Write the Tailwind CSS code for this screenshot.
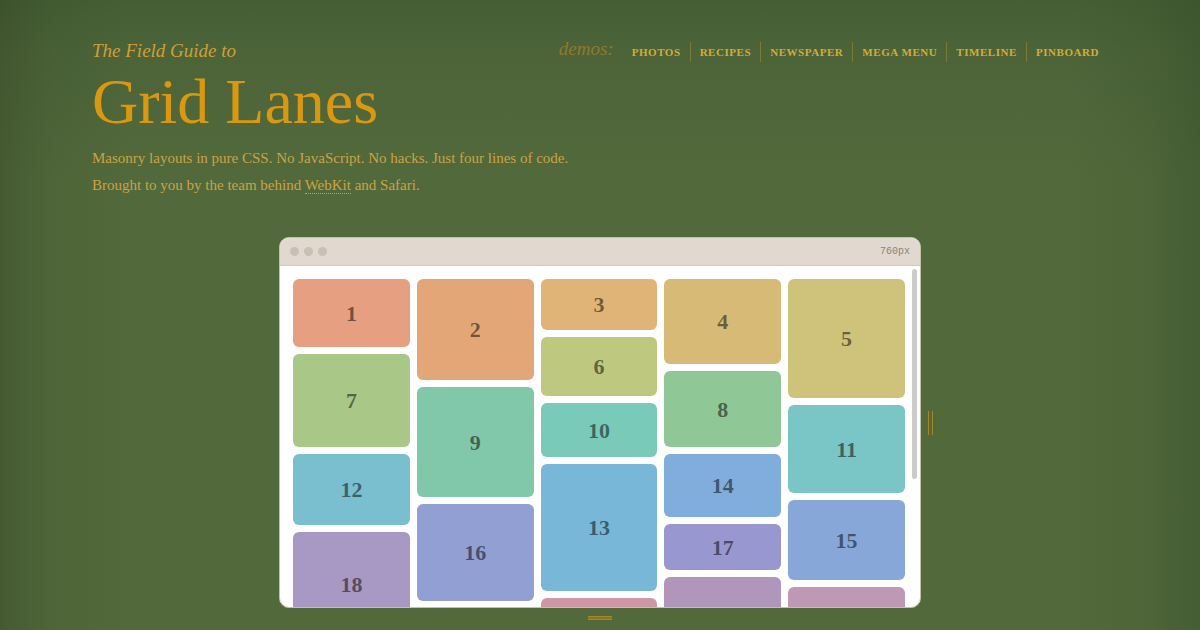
<!DOCTYPE html>
<html lang="en">
<head>
    <meta charset="UTF-8">
    <meta name="viewport" content="width=device-width, initial-scale=1.0">
    <title>The Field Guide to Grid Lanes</title>
    <script src="https://cdn.jsdelivr.net/npm/@tailwindcss/browser@4"></script>
</head>
<body class="h-screen overflow-hidden bg-[#526a3b] font-['Liberation_Serif',serif]">
    <div class="min-h-screen bg-[linear-gradient(to_right,rgb(40_50_25/0.28),rgb(40_60_30/0.12)_50px,transparent_130px),linear-gradient(to_left,rgb(35_60_30/0.28),rgb(40_60_30/0.12)_50px,transparent_130px),linear-gradient(to_bottom,rgb(30_60_30/0.25),rgb(40_60_40/0.14)_50px,transparent_180px)]">
        <header class="px-[92px] pt-[38px]">
            <div class="flex items-start justify-between">
                <h1 class="text-[#d9980f]">
                    <span class="block text-[19px] leading-[26px] italic text-[#cf9f37]">The Field Guide to</span>
                    <span class="block text-[64px] leading-[76px]">Grid Lanes</span>
                </h1>
                <nav class="flex items-start whitespace-nowrap" aria-label="Demos">
                    <span class="mr-[9px] text-[19px] leading-[22px] italic text-[#8f7a2a]">demos:</span>
                    <ul class="mt-1 flex divide-x divide-[#7d7a33] text-[11px] leading-5 font-bold tracking-wider uppercase text-[#d6ab35]">
                        <li class="px-[9px]"><a href="#">Photos</a></li>
                        <li class="px-[9px]"><a href="#">Recipes</a></li>
                        <li class="px-[9px]"><a href="#">Newspaper</a></li>
                        <li class="px-[9px]"><a href="#">Mega Menu</a></li>
                        <li class="px-[9px]"><a href="#">Timeline</a></li>
                        <li class="px-[9px]"><a href="#">Pinboard</a></li>
                    </ul>
                </nav>
            </div>
            <p class="mt-[5px] text-[15px] leading-[27px] text-[#cda243]">
                Masonry layouts in pure CSS. No JavaScript. No hacks. Just four lines of code.<br>
                Brought to you by the team behind <a href="#" class="border-b border-dotted border-[#cda243]">WebKit</a> and Safari.
            </p>
        </header>

        <main class="mt-[38px] grid grid-cols-[1fr_minmax(0,642px)_1fr] gap-x-[7px] gap-y-2">
            <section class="col-start-2 overflow-hidden rounded-[10px] border border-[#c3c1a8] bg-white">
                <div class="flex h-7 items-center justify-between border-b border-[#cfcbbb] bg-[#e1d9cf] px-[10px]">
                    <div class="flex gap-[5px]">
                        <span class="size-[9px] rounded-full bg-[#c8c1b3]"></span>
                        <span class="size-[9px] rounded-full bg-[#c8c1b3]"></span>
                        <span class="size-[9px] rounded-full bg-[#c8c1b3]"></span>
                    </div>
                    <span class="font-['Liberation_Mono',monospace] text-[10px] text-[#8a8478]">760px</span>
                </div>
                <div class="flex h-[341px] items-start overflow-hidden">
                    <div id="lanes" class="grid flex-1 grid-cols-5 gap-[7px] pt-[13px] pl-[13px] text-[22px] font-bold text-black/50"></div>
                    <div class="mt-[3px] mr-[3px] ml-[7px] h-[210px] w-[5px] rounded-full bg-[#cbcbcb]"></div>
                </div>
            </section>
            <div class="h-6 w-[5px] self-center border-x border-[#a8852a]"></div>
            <div class="col-start-2 h-1 w-6 justify-self-center border-y border-[#a8852a] bg-[#85762a]"></div>
        </main>
    </div>

    <script>
        // [number, height, colour] for each card, lane by lane
        const lanes = [
            [[1, 68, '#e6a081'], [7, 93, '#a9c888'], [12, 71, '#79bfd0'], [18, 104, '#a898c4']],
            [[2, 101, '#e3a777'], [9, 110, '#81c7a9'], [16, 97, '#929fd3']],
            [[3, 51, '#e0b376'], [6, 59, '#bec97f'], [10, 54, '#7acab9'], [13, 127, '#79b7d9'], ['', 80, '#cd97a6']],
            [[4, 85, '#d6ba75'], [8, 76, '#90c797'], [14, 63, '#80addc'], [17, 46, '#9997cf'], ['', 90, '#b096bb']],
            [[5, 119, '#cfc37b'], [11, 88, '#7ac5c5'], [15, 80, '#87a7d8'], ['', 90, '#be98b5']]
        ];

        document.getElementById('lanes').innerHTML = lanes.map(cards => `
            <div class="flex flex-col gap-[7px]">
                ${cards.map(([n, height, color]) => `
                    <div class="flex shrink-0 items-center justify-center rounded-md" style="height: ${height}px; background: ${color}">${n}</div>
                `).join('')}
            </div>
        `).join('');
    </script>
</body>
</html>
